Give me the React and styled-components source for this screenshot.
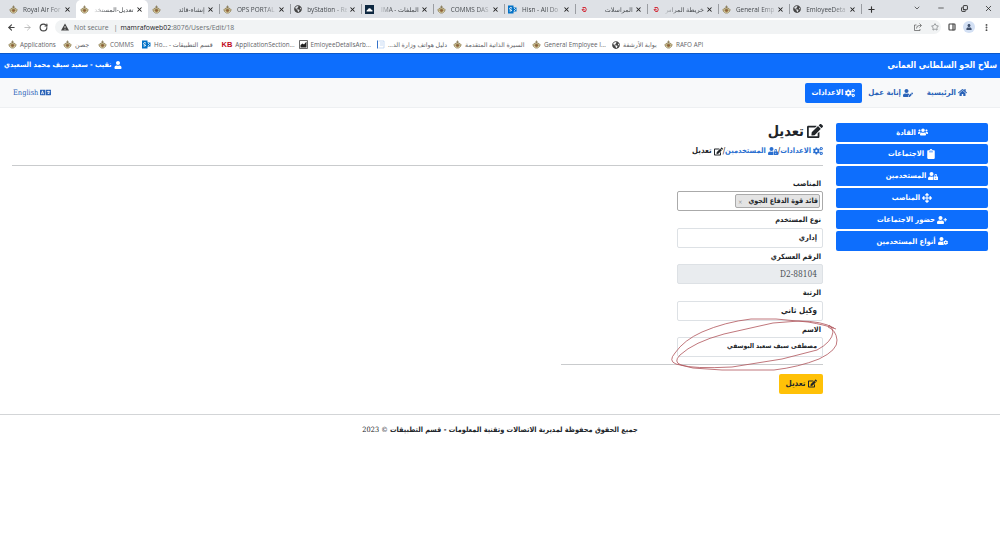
import React from 'react';
import styled, { createGlobalStyle } from 'styled-components';
import {
  FaUsers, FaClipboard, FaUserLock, FaArrowsAlt, FaUserPlus, FaUserCog, FaCogs, FaHome,
  FaUserEdit, FaEdit, FaLanguage, FaUser, FaGlobeAmericas,
} from 'react-icons/fa';
import { LuPanelRight, LuStar, LuRotateCw, LuArrowLeft, LuArrowRight, LuEllipsisVertical, LuChevronDown, LuMinus, LuX, LuPlus, LuCopy } from 'react-icons/lu';

const Global = createGlobalStyle`
  * { box-sizing: border-box; }
  html, body { margin: 0; background: #fff; overflow: hidden; }
  svg { flex: none; display: block; }
`;

const Screen = styled.div`
  width: 1000px;
  height: 541px;
  overflow: hidden;
  display: flex;
  flex-direction: column;
  color: #212529;
  font-family: "DejaVu Sans Condensed", "DejaVu Sans", sans-serif;
  font-stretch: condensed;
  font-size: 8px;
`;

const Chrome = styled.div`
  height: 53px;
  flex: none;
  font-family: "Open Sans", "DejaVu Sans", sans-serif;
  font-stretch: normal;
  color: #5f6368;
`;

const TabStrip = styled.div`
  height: 18px;
  background: #dee1e6;
  display: flex;
  align-items: stretch;
  padding-left: 5px;
`;

const Tab = styled.div`
  width: 71.3px;
  display: flex;
  align-items: center;
  padding: 0 5px 0 4px;
  font-size: 6.5px;
  color: #45494d;
  background: ${p => (p.$active ? '#fff' : 'transparent')};
  border-radius: 5px 5px 0 0;
  & > svg:last-child { color: #222; }
`;

const TabTitle = styled.span`
  flex: 1;
  min-width: 0;
  margin: 0 2px 0 5px;
  overflow: hidden;
  white-space: nowrap;
  font-size: 6.4px;
  direction: ${p => (p.$rtl ? 'rtl' : 'ltr')};
  mask-image: linear-gradient(${p => (p.$rtl ? 'to left' : 'to right')}, #000 65%, rgba(0, 0, 0, 0.15));
`;

const Divider = styled.i`
  width: 1px;
  height: 10px;
  margin: 4px -1px 0 0;
  background: #9a9da2;
`;

const NewTab = styled.div`
  display: flex;
  align-items: center;
  margin-left: 6px;
  color: #333;
`;

const WindowButtons = styled.div`
  margin-left: auto;
  display: flex;
  align-items: center;
  gap: 16px;
  padding: 0 7px 2px 0;
  color: #222;
`;

const AddressRow = styled.div`
  height: 18px;
  display: flex;
  align-items: center;
  background: #fff;
  padding: 0 7px;
  gap: 7px;
  color: #444;
`;

const Omnibox = styled.div`
  width: 886px;
  height: 14px;
  border-radius: 7px;
  background: #f1f3f4;
  display: flex;
  align-items: center;
  padding: 0 2px 0 6px;
  gap: 5px;
  font-size: 6.85px;
  color: #6b6f73;
  b { font-weight: 400; color: #202124; margin: 0 -5px 0 -2px; }
  svg:nth-last-child(2) { margin-left: auto; margin-right: 4px; }
`;

const Profile = styled.span`
  width: 12px;
  height: 12px;
  border-radius: 50%;
  background: #d3e0f4;
  display: grid;
  place-items: center;
  color: #40516e;
`;

const Bookmarks = styled.div`
  height: 17px;
  background: #fff;
  display: flex;
  align-items: center;
  padding-left: 8px;
`;

const Bookmark = styled.div`
  width: ${p => p.$w}px;
  flex: none;
  display: flex;
  align-items: center;
  gap: 3px;
  white-space: nowrap;
  font-size: 6.3px;
`;

const BookmarkTitle = styled.span`
  direction: ${p => (p.$rtl ? 'rtl' : 'ltr')};
`;

const Letters = styled.b`
  color: #c00c1d;
  font: 700 7.5px "Liberation Sans", sans-serif;
`;

const TopBar = styled.header`
  height: 25px;
  flex: none;
  background: #0d6efd;
  border-top: 1px solid #0a58ca;
  color: #fff;
  display: flex;
  justify-content: space-between;
  align-items: center;
  direction: rtl;
  padding: 0 3px 1px 4px;
`;

const Label = styled.span`
  display: inline-flex;
  align-items: center;
  gap: 2px;
  white-space: nowrap;
  font-size: ${p => p.$size || 7.5}px;
  font-weight: 700;
  line-height: 1.4;
  svg { margin-bottom: 1px; }
`;

const NavBar = styled.nav`
  height: 30px;
  flex: none;
  background: #f8f9fa;
  border-bottom: 1px solid #eef0f2;
  display: flex;
  align-items: center;
  direction: rtl;
  padding: 0 33px 0 13px;
`;

const NavLink = styled.a`
  height: 20px;
  display: flex;
  justify-content: center;
  align-items: center;
  padding-top: 1px;
  width: ${p => p.$w}px;
  border-radius: 2px;
  color: ${p => (p.$active ? '#fff' : '#2a63b8')};
  background: ${p => (p.$active ? '#0d6efd' : 'transparent')};
`;

const NavStart = styled(NavLink)`
  justify-content: flex-start;
`;

const Language = styled.a`
  margin-right: auto;
  display: flex;
  align-items: center;
  gap: 2px;
  color: #2a63b8;
  font: 7.4px "DejaVu Serif", serif;
  font-stretch: condensed;
`;

const Body = styled.div`
  height: 307px;
  flex: none;
  display: flex;
  direction: rtl;
  padding: 14px 12px 0;
  border-bottom: 1px solid #d3d5d7;
`;

const SideMenu = styled.aside`
  width: 152px;
  margin-left: 13px;
  padding-top: 0.5px;
  display: flex;
  flex-direction: column;
  gap: 2px;
`;

const SideButton = styled.a`
  height: 19.8px;
  display: flex;
  align-items: center;
  justify-content: center;
  padding-top: 1px;
  background: #0d6efd;
  color: #fff;
  border-radius: 2px;
`;

const Main = styled.main`
  flex: 1;
  display: flex;
  flex-direction: column;
`;

const Title = styled.h1`
  margin: 0;
  height: 18px;
  display: flex;
  align-items: center;
  gap: 3px;
  font-size: 14.5px;
  font-weight: 700;
  line-height: 18px;
`;

const Crumbs = styled.div`
  margin-top: 5px;
  height: 13px;
  display: flex;
  align-items: center;
  a { display: flex; color: #2a6fd0; }
`;

const Rule = styled.hr`
  width: ${p => p.$w}px;
  height: 1px;
  border: 0;
  margin: ${p => p.$m};
  background: #c9cbcd;
`;

const Field = styled.div`
  width: 146px;
  height: 36.4px;
  display: flex;
  flex-direction: column;
`;

const FieldName = styled.label`
  height: 16.4px;
  padding: 3px 2px 0 0;
  font-size: 7.4px;
  font-weight: 700;
  line-height: 12px;
`;

const Input = styled.div`
  height: 20px;
  border: 1px solid ${p => (p.$dark ? '#aaa' : '#dde1e5')};
  border-radius: 2px;
  background: ${p => (p.$disabled ? '#e9ecef' : '#fff')};
  padding: 0 ${p => (p.$dark ? 2 : 5)}px;
  display: flex;
  align-items: center;
`;

const Chip = styled.div`
  width: 85px;
  height: 14px;
  border: 1px solid #aaa;
  border-radius: 2px;
  background: #e4e4e4;
  display: flex;
  align-items: center;
  justify-content: space-between;
  padding: 0 1px 0 2px;
  i { color: #999; font-style: normal; font-size: 6px; }
`;

const Serial = styled.span`
  font: 8.3px "DejaVu Serif", serif;
  font-stretch: condensed;
  color: #4b5055;
`;

const Submit = styled.button`
  width: 44px;
  height: 20px;
  border: 0;
  border-radius: 2px;
  padding: 0;
  background: #ffc107;
  color: #212529;
  font-family: inherit;
  font-stretch: inherit;
  display: flex;
  align-items: center;
  justify-content: center;
`;

const Footer = styled.footer`
  direction: rtl;
  text-align: center;
  padding-top: 10px;
`;

const Year = styled.span`
  font-weight: 400;
  font-family: "DejaVu Serif", serif;
`;

const Scribble = styled.svg`
  position: absolute;
  left: 668px;
  top: 312px;
`;

const Crest = () => (
  <svg width="9" height="9" viewBox="0 0 18 18" fill="none" stroke="#77663c" strokeWidth="1.3">
    <path d="M6 4h6M9 1v5M4 7Q0 9 3 13l4 3h4l4-3Q18 9 14 7L9 6Z" fill="#e8dcb0" />
    <circle cx="9" cy="11" r="2.500" fill="#a55a34" />
    <path d="M3 10h12" />
  </svg>
);
const SharePoint = () => (
  <svg width="9" height="9" viewBox="0 0 18 18">
    <path d="M0 1h11v4h6v8h-6v4H0Z" fill="#0372c6" />
    <path d="M8 6Q3 4 3 7t4 3q1 3-4 2" fill="none" stroke="#fff" strokeWidth="1.8" />
    <path d="m12 6 3 3-3 3" fill="none" stroke="#fff" strokeWidth="1.5" />
  </svg>
);
const Cloud = () => (
  <svg width="9" height="9" viewBox="0 0 18 18">
    <path d="M0 0h18v18H0Z" fill="#0d2740" />
    <path d="M3 13q0-4 3-4 1-4 5-2 1 1 1 2 4 0 3 4Z" fill="#fff" />
  </svg>
);
const RedMark = () => (
  <svg width="9" height="9" viewBox="0 0 18 18" fill="none" stroke="#d32b38" strokeWidth="2">
    <path d="M7 5h6q3 4 0 8H9L6 9l4-1v3" />
  </svg>
);
const Report = () => (
  <svg width="9" height="9" viewBox="0 0 18 18">
    <path d="M1 1h16v16H1Z" fill="#fff" stroke="#444" strokeWidth="1.6" />
    <path d="M3 15V10l4-3 3 2 5-6v12Z" fill="#222" />
  </svg>
);
const Sheet = () => (
  <svg width="9" height="9" viewBox="0 0 18 18" fill="none" stroke="#b3cdf0" strokeWidth="1.4">
    <path d="M3 1v16" stroke="#3472c9" strokeWidth="2" />
    <path d="M5 2h11v14H5M8 6h6M8 10h6" />
  </svg>
);
const Warning = () => (
  <svg width="8" height="8" viewBox="0 0 16 16">
    <path d="M8 1 16 15H0Z" fill="#444" />
    <path d="M8 6v4m0 1.500v2" stroke="#fff" strokeWidth="1.6" />
  </svg>
);
const SharePage = () => (
  <svg width="8" height="8" viewBox="0 0 16 16" fill="none" stroke="#555" strokeWidth="1.4">
    <path d="M5 4H1v11h11v-3M5 11q0-6 6-6h3M11 1l4 4-4 4" />
  </svg>
);
const Globe = () => <FaGlobeAmericas size={8} color="#444" />;

const tabs = [
  [Crest, 'Royal Air For'],
  [Crest, 'تعديل-المستخد', true],
  [Crest, 'إنشاء-قائد', true],
  [Crest, 'OPS PORTAL'],
  [Globe, 'byStation - Re'],
  [Cloud, 'الملفات - IMA', true],
  [Crest, 'COMMS DAS'],
  [SharePoint, 'Hisn - All Do'],
  [RedMark, 'المراسلات', true],
  [RedMark, 'خريطة المراس', true],
  [Crest, 'General Emp'],
  [Globe, 'EmloyeeDeta'],
];

const bookmarks = [
  [Crest, 'Applications', 55],
  [Crest, 'جصن', 35],
  [Crest, 'COMMS', 44],
  [SharePoint, 'Ho... - قسم التطبيقات', 79.5],
  [null, 'ApplicationSection...', 77],
  [Report, 'EmloyeeDetailsArb...', 77.5],
  [Sheet, 'دليل هواتف وزارة الد...', 77, true],
  [Crest, 'السيرة الذاتية المتقدمة', 79, true],
  [Crest, 'General Employee I...', 80],
  [Globe, 'بوابة الأرشفة', 52, true],
  [Crest, 'RAFO API', 60],
];

const menu = [
  [FaUsers, 'القادة'],
  [FaClipboard, 'الاجتماعات'],
  [FaUserLock, 'المستخدمين'],
  [FaArrowsAlt, 'المناصب'],
  [FaUserPlus, 'حضور الاجتماعات'],
  [FaUserCog, 'أنواع المستخدمين'],
];

export default function App() {
  return (
    <Screen>
      <Global />
      <Chrome>
        <TabStrip>
          {tabs.map(([Icon, title, rtl], i) => (
            <React.Fragment key={i}>
              <Tab $active={i === 1}>
                <Icon />
                <TabTitle $rtl={rtl}>{title}</TabTitle>
                <LuX size={7} strokeWidth={3.5} />
              </Tab>
              {i > 1 && <Divider />}
            </React.Fragment>
          ))}
          <NewTab><LuPlus size={9} strokeWidth={3} /></NewTab>
          <WindowButtons>
            <LuChevronDown size={8} /><LuMinus size={8} /><LuCopy size={7} strokeWidth={3} transform="scale(1 -1)" /><LuX size={9} />
          </WindowButtons>
        </TabStrip>
        <AddressRow>
          <LuArrowLeft size={9} strokeWidth={3} />
          <LuArrowRight size={9} color="#aaa" />
          <LuRotateCw size={9} strokeWidth={3} />
          <Omnibox>
            <Warning />
            <span>Not secure</span><span>|</span><b>mamrafoweb02</b><span>:8076/Users/Edit/18</span>
            <SharePage />
            <LuStar size={8} />
          </Omnibox>
          <LuPanelRight size={8} strokeWidth={3.5} />
          <Profile><FaUser size={6} /></Profile>
          <LuEllipsisVertical size={9} strokeWidth={3} />
        </AddressRow>
        <Bookmarks>
          {bookmarks.map(([Icon, title, w, rtl]) => (
            <Bookmark key={title} $w={w}>
              {Icon ? <Icon /> : <Letters>KB</Letters>}
              <BookmarkTitle $rtl={rtl}>{title}</BookmarkTitle>
            </Bookmark>
          ))}
        </Bookmarks>
      </Chrome>

      <TopBar>
        <Label $size={8.6}>سلاح الجو السلطاني العماني</Label>
        <Label $size={7.2}><FaUser size={8} />نقيب - سعيد سيف محمد السعيدي</Label>
      </TopBar>

      <NavBar>
        <NavStart $w={54}><Label $size={7.8}><FaHome size={9} />الرئيسية</Label></NavStart>
        <NavStart $w={51}><Label $size={7.8}><FaUserEdit size={10} />إنابة عمل</Label></NavStart>
        <NavLink $w={57} $active><Label $size={7.8}><FaCogs size={10} />الاعدادات</Label></NavLink>
        <Language><FaLanguage size={11} />English</Language>
      </NavBar>

      <Body>
        <SideMenu>
          {menu.map(([Icon, text]) => (
            <SideButton key={text}><Label><Icon size={10} />{text}</Label></SideButton>
          ))}
        </SideMenu>
        <Main>
          <Title><FaEdit size={16} />تعديل</Title>
          <Crumbs>
            <a><Label><FaCogs size={10} />الاعدادات</Label></a>/
            <a><Label><FaUserLock size={10} />المستخدمين</Label></a>/
            <Label $size={7.8}><FaEdit size={9} />تعديل</Label>
          </Crumbs>
          <Rule $w={811} $m="7px 0 9px" />
          <Field>
            <FieldName>المناصب</FieldName>
            <Input $dark><Chip><Label $size={7.1}>قائد قوة الدفاع الجوي</Label><i>×</i></Chip></Input>
          </Field>
          <Field>
            <FieldName>نوع المستخدم</FieldName>
            <Input><Label>إداري</Label></Input>
          </Field>
          <Field>
            <FieldName>الرقم العسكري</FieldName>
            <Input $disabled><Serial>D2-88104</Serial></Input>
          </Field>
          <Field>
            <FieldName>الرتبة</FieldName>
            <Input><Label $size={8}>وكيل ثاني</Label></Input>
          </Field>
          <Field>
            <FieldName>الاسم</FieldName>
            <Input><Label $size={6.7}>مصطفى سيف سعيد اليوسفي</Label></Input>
          </Field>
          <Rule $w={262} $m="7px 0 9px" />
          <Submit><Label $size={8}><FaEdit size={9} />تعديل</Label></Submit>
        </Main>
      </Body>

      <Footer>
        <Label $size={7.3}>
          <span>جميع الحقوق محفوظة لمديرية الاتصالات وتقنية المعلومات - قسم التطبيقات <Year>© 2023</Year></span>
        </Label>
      </Footer>

      <Scribble width="174" height="62" viewBox="668 312 174 62" fill="none" stroke="#b0545b" strokeWidth="0.8">
        <path d="M834 328Q822 321 799 321L773 323 724 334Q694 342 680 355 673 362 681 365 693 369 732 367L782 359 817 350Q832 342 833 332 832 326 829 325" />
        <path d="M836 329Q826 325 808 322L776 319H751Q725 322 702 332 684 340 675 353 668 361 676 364L693 368 722 370H774Q799 367 819 359 838 350 837 340 836 330 828 327" />
      </Scribble>
    </Screen>
  );
}
